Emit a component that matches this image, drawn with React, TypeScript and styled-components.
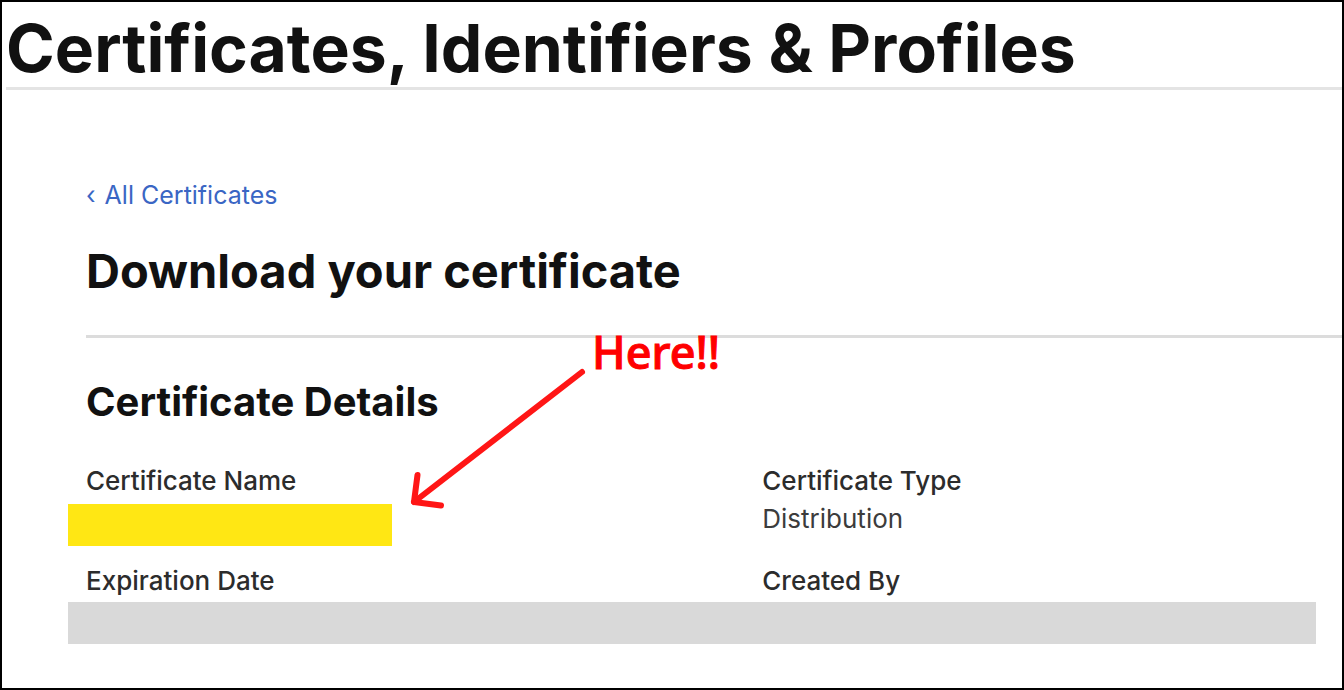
import React from "react";
import styled, { createGlobalStyle } from "styled-components";

const Global = createGlobalStyle`
  * { box-sizing: border-box; }
  body { margin: 0; background: #fff; font-family: Inter, "Liberation Sans", sans-serif; color: #111; }
`;

const Frame = styled.div`
  position: relative;
  min-height: 100vh;
  border: 2px solid #000;
  overflow: hidden;
`;

const Header = styled.header`
  margin-left: 4px;
  border-bottom: 3px solid #e4e4e4;
`;

const PageTitle = styled.h1`
  margin: 0;
  padding: 8px 0 1px;
  font-size: 66px;
  line-height: 76px;
  font-weight: 700;
  white-space: nowrap;
`;

const Main = styled.main`
  padding: 89px 0 40px 84px;
`;

const BackLink = styled.a`
  display: inline-flex;
  align-items: center;
  gap: 9px;
  font-size: 25px;
  line-height: 32px;
  color: #3a66c4;
  text-decoration: none;
`;

const SectionTitle = styled.h2`
  margin: 32px 0 0;
  padding-bottom: 36px;
  border-bottom: 3px solid #dcdcdc;
  font-size: 47px;
  line-height: 56px;
  font-weight: 700;
`;

const DetailsTitle = styled.h3`
  margin: 40px 0 0;
  font-size: 40px;
  line-height: 48px;
  font-weight: 700;
`;

const Details = styled.dl`
  display: grid;
  grid-template-columns: 35fr 30fr;
  row-gap: 18px;
  margin: 38px 0 0;
`;

const Label = styled.dt`
  font-size: 26px;
  line-height: 34px;
  font-weight: 500;
  color: #2c2c2c;
`;

const Value = styled.dd`
  margin: 4px 0 0;
  font-size: 26px;
  line-height: 34px;
  color: #3c3c3c;
`;

const HiddenName = styled.dd`
  width: 324px;
  height: 42px;
  margin: 6px 0 0 -18px;
  background: #ffe714;
`;

const HiddenRow = styled.div`
  height: 42px;
  margin: 4px 26px 0 -18px;
  background: #d9d9d9;
`;

const Annotation = styled.div`
  position: absolute;
  left: 408px;
  top: 318px;
  display: flex;
  align-items: flex-start;
  gap: 6px;
  pointer-events: none;
`;

const Arrow = styled.svg`
  display: block;
  margin-top: 48px;
`;

const Callout = styled.span`
  font-family: "Noto Sans", sans-serif;
  font-size: 45px;
  line-height: 64px;
  font-weight: 500;
  color: #f00;
  -webkit-text-stroke: 1px #f00;
`;

export default function App() {
  return (
    <Frame>
      <Global />
      <Header>
        <PageTitle>Certificates, Identifiers &amp; Profiles</PageTitle>
      </Header>
      <Main>
        <BackLink href="#">
          <span>‹</span>All Certificates
        </BackLink>
        <SectionTitle>Download your certificate</SectionTitle>
        <DetailsTitle>Certificate Details</DetailsTitle>
        <Details>
          <div>
            <Label>Certificate Name</Label>
            <HiddenName />
          </div>
          <div>
            <Label>Certificate Type</Label>
            <Value>Distribution</Value>
          </div>
          <div>
            <Label>Expiration Date</Label>
          </div>
          <div>
            <Label>Created By</Label>
          </div>
        </Details>
        <HiddenRow />
      </Main>
      <Annotation>
        <Arrow width="176" height="142" viewBox="0 0 176 142" fill="none" stroke="#ff1616" strokeWidth="6" strokeLinecap="round" aria-hidden="true">
          <path d="M172 4 L4 134" />
          <path d="M7.500 107 L4 134 L31 137.500" strokeLinejoin="round" />
        </Arrow>
        <Callout>Here!!</Callout>
      </Annotation>
    </Frame>
  );
}
